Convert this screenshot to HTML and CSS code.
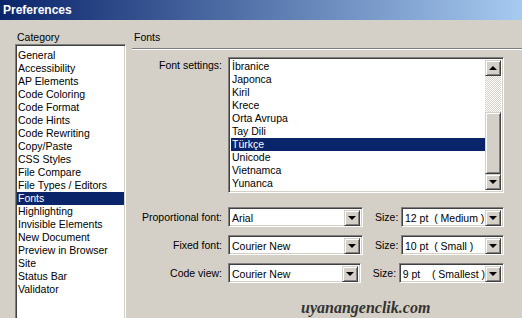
FILE: index.html
```html
<!DOCTYPE html>
<html>
  <head>
    <meta charset="UTF-8" />
    <title>Preferences</title>
    <link rel="stylesheet" href="styles.css">
  </head>

  <body>
    <div class="window">
      <div class="titlebar">Preferences</div>

      <div class="dialog">
        <div class="category">
          <div class="caption">Category</div>
          <ul class="listbox category-list">
            <li>General</li>
            <li>Accessibility</li>
            <li>AP Elements</li>
            <li>Code Coloring</li>
            <li>Code Format</li>
            <li>Code Hints</li>
            <li>Code Rewriting</li>
            <li>Copy/Paste</li>
            <li>CSS Styles</li>
            <li>File Compare</li>
            <li>File Types / Editors</li>
            <li class="selected">Fonts</li>
            <li>Highlighting</li>
            <li>Invisible Elements</li>
            <li>New Document</li>
            <li>Preview in Browser</li>
            <li>Site</li>
            <li>Status Bar</li>
            <li>Validator</li>
          </ul>
        </div>

        <div class="panel">
          <div class="panel-title">Fonts</div>

          <div class="settings">
            <label class="label top">Font settings:</label>
            <div class="listbox font-list">
              <ul>
                <li>İbranice</li>
                <li>Japonca</li>
                <li>Kiril</li>
                <li>Krece</li>
                <li>Orta Avrupa</li>
                <li>Tay Dili</li>
                <li class="selected">Türkçe</li>
                <li>Unicode</li>
                <li>Vietnamca</li>
                <li>Yunanca</li>
              </ul>
              <div class="scrollbar">
                <div class="sb-btn"><span class="arrow up"></span></div>
                <div class="sb-track"></div>
                <div class="sb-thumb"></div>
                <div class="sb-btn"><span class="arrow down"></span></div>
              </div>
            </div>

            <label class="label">Proportional font:</label>
            <div class="select-row">
              <div class="select font-select"><span class="value">Arial</span><span class="drop"><span class="arrow down"></span></span></div>
              <span class="size-label">Size:</span>
              <div class="select size-select"><span class="value">12 pt  ( Medium )</span><span class="drop"><span class="arrow down"></span></span></div>
            </div>

            <label class="label">Fixed font:</label>
            <div class="select-row">
              <div class="select font-select"><span class="value">Courier New</span><span class="drop"><span class="arrow down"></span></span></div>
              <span class="size-label">Size:</span>
              <div class="select size-select"><span class="value">10 pt  ( Small )</span><span class="drop"><span class="arrow down"></span></span></div>
            </div>

            <label class="label">Code view:</label>
            <div class="select-row">
              <div class="select font-select"><span class="value">Courier New</span><span class="drop"><span class="arrow down"></span></span></div>
              <span class="size-label">Size:</span>
              <div class="select size-select"><span class="value">9 pt    ( Smallest )</span><span class="drop"><span class="arrow down"></span></span></div>
            </div>
          </div>

          <div class="watermark">uyanangenclik.com</div>
        </div>
      </div>
    </div>
  </body>
</html>
```

FILE: styles.css
```css
body {
  margin: 0;
  padding: 0;
  font-family: "Liberation Sans", Arial, sans-serif;
  font-size: 10.5px;
  color: #000;
  background-color: #d4d0c8;
}

.window {
  width: 522px;
  height: 318px;
  overflow: hidden;
  background-color: #d4d0c8;
}

.titlebar {
  height: 20px;
  line-height: 20px;
  padding-left: 3px;
  font-size: 12px;
  font-weight: bold;
  color: #fff;
  background: linear-gradient(to right, #0a246a, #a6caf0);
}

.dialog {
  display: flex;
  padding: 11px 0 0 15px;
}

.category {
  width: 111px;
  flex-shrink: 0;
}

.caption,
.panel-title {
  line-height: 13px;
  padding-left: 2px;
}

/* sunken field border */
.listbox,
.select {
  box-sizing: border-box;
  background-color: #fff;
  border: 1px solid;
  border-color: #808080 #fff #fff #808080;
  box-shadow: inset 1px 1px #404040, inset -1px -1px #d4d0c8;
}

.listbox ul,
ul.listbox {
  list-style: none;
  margin: 0;
}

.category-list {
  margin-top: 5px;
  height: 300px;
  padding: 4px 1px 2px;
}

.category-list li,
.font-list li {
  height: 13px;
  line-height: 13px;
  padding-left: 1px;
  white-space: nowrap;
}

li.selected {
  background-color: #0a246a;
  color: #fff;
}

.panel {
  margin-left: 6px;
  flex: 1;
}

.panel-title {
  padding-bottom: 4px;
  border-bottom: 1px solid #808080;
  box-shadow: 0 1px #fff;
}

.settings {
  display: grid;
  grid-template-columns: 90px 276px;
  column-gap: 6px;
  row-gap: 8px;
  margin-top: 8px;
}

.label {
  text-align: right;
  align-self: center;
  white-space: nowrap;
}

.label.top {
  align-self: start;
  padding-top: 2px;
}

.font-list {
  display: flex;
  height: 136px;
  margin-bottom: 6px;
  padding: 2px;
}

.font-list ul {
  flex: 1;
  padding: 0;
}

.scrollbar {
  width: 16px;
  display: flex;
  flex-direction: column;
}

.sb-btn,
.sb-thumb,
.drop {
  box-sizing: border-box;
  background-color: #d4d0c8;
  border: 1px solid;
  border-color: #d4d0c8 #404040 #404040 #d4d0c8;
  box-shadow: inset 1px 1px #fff, inset -1px -1px #808080;
}

.sb-btn {
  height: 16px;
  display: flex;
  align-items: center;
  justify-content: center;
}

.sb-track {
  height: 37px;
  background-image: repeating-conic-gradient(#fff 0 25%, #d4d0c8 0 50%);
  background-size: 2px 2px;
}

.sb-thumb {
  height: 63px;
}

.arrow {
  width: 0;
  height: 0;
  border-left: 4px solid transparent;
  border-right: 4px solid transparent;
}

.arrow.up {
  border-bottom: 4px solid #000;
}

.arrow.down {
  border-top: 4px solid #000;
}

.select-row {
  display: flex;
  align-items: center;
  height: 20px;
}

.select {
  display: flex;
  height: 20px;
  padding: 2px;
}

.font-select {
  width: 135px;
}

.size-select {
  flex: 1;
}

.size-label {
  margin-left: 12px;
  margin-right: 3px;
  width: 23px;
}

.value {
  flex: 1;
  overflow: hidden;
  white-space: pre;
  line-height: 16px;
  padding-left: 1px;
}

.drop {
  width: 16px;
  height: 16px;
  display: flex;
  align-items: center;
  justify-content: center;
}

.watermark {
  margin-top: 16px;
  padding-left: 169px;
  font-family: "Liberation Serif", "Times New Roman", serif;
  font-size: 16px;
  font-weight: bold;
  font-style: italic;
  line-height: 18px;
  color: #333;
}
```
